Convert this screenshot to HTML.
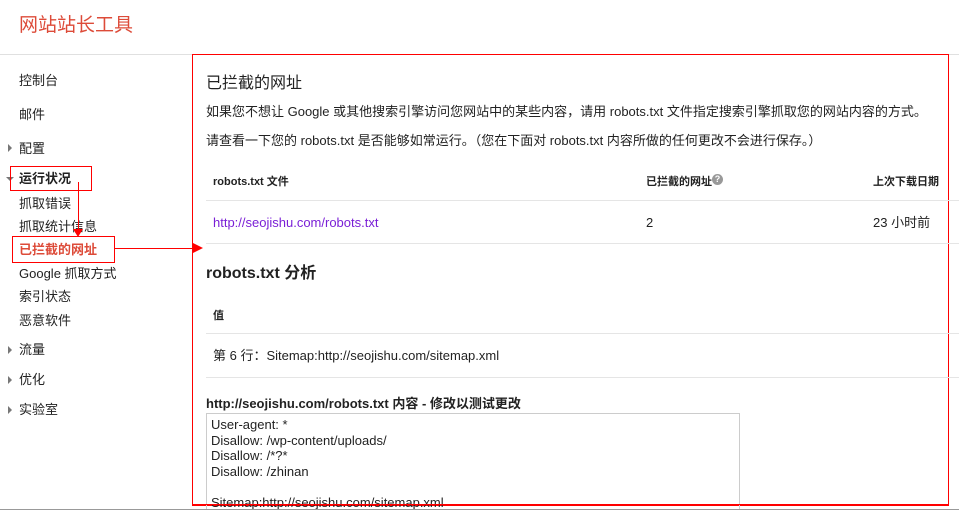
<!DOCTYPE html>
<html style="width:959px;height:513px;overflow:hidden"><head><meta charset="utf-8"><style>
*{margin:0;padding:0;box-sizing:border-box}
body{width:959px;height:513px;overflow:hidden;background:#fff;font-family:"Liberation Sans","Noto Sans CJK SC",sans-serif;color:#222;position:relative;font-size:13px;line-height:17px}
.a{position:absolute;white-space:nowrap}
.hl{position:absolute;height:1px;background:#e5e5e5}
.tri{position:absolute;width:0;height:0}
</style></head><body>
<div class="a" style="left:19px;top:14px;font-size:19px;line-height:24px;color:#dd4b39">网站站长工具</div>
<div class="hl" style="left:0;top:54px;width:959px;background:#e0e0e0"></div>

<div class="a" style="left:19px;top:72px">控制台</div>
<div class="a" style="left:19px;top:106px">邮件</div>
<div class="tri" style="left:8px;top:144px;border-left:4px solid #777;border-top:4px solid transparent;border-bottom:4px solid transparent"></div>
<div class="a" style="left:19px;top:140px">配置</div>
<div class="tri" style="left:6px;top:177px;border-top:4px solid #777;border-left:4px solid transparent;border-right:4px solid transparent"></div>
<div class="a" style="left:19px;top:170px;font-weight:bold">运行状况</div>
<div class="a" style="left:19px;top:195px">抓取错误</div>
<div class="a" style="left:19px;top:218px">抓取统计信息</div>
<div class="a" style="left:19px;top:241px;font-weight:bold;color:#dd4b39">已拦截的网址</div>
<div class="a" style="left:19px;top:265px">Google 抓取方式</div>
<div class="a" style="left:19px;top:288px">索引状态</div>
<div class="a" style="left:19px;top:312px">恶意软件</div>
<div class="tri" style="left:8px;top:346px;border-left:4px solid #777;border-top:4px solid transparent;border-bottom:4px solid transparent"></div>
<div class="a" style="left:19px;top:341px">流量</div>
<div class="tri" style="left:8px;top:376px;border-left:4px solid #777;border-top:4px solid transparent;border-bottom:4px solid transparent"></div>
<div class="a" style="left:19px;top:371px">优化</div>
<div class="tri" style="left:8px;top:406px;border-left:4px solid #777;border-top:4px solid transparent;border-bottom:4px solid transparent"></div>
<div class="a" style="left:19px;top:401px">实验室</div>

<div class="a" style="left:10px;top:166px;width:82px;height:25px;border:1px solid #f00"></div>
<div class="a" style="left:12px;top:236px;width:103px;height:27px;border:1px solid #f00"></div>
<div class="a" style="left:78px;top:182px;width:1px;height:48px;background:#f00"></div>
<div class="tri" style="left:73px;top:229px;border-top:8px solid #f00;border-left:5px solid transparent;border-right:5px solid transparent"></div>
<div class="a" style="left:115px;top:248px;width:80px;height:1px;background:#f00"></div>
<div class="tri" style="left:193px;top:243px;border-left:10px solid #f00;border-top:5px solid transparent;border-bottom:5px solid transparent"></div>

<div class="a" style="left:192px;top:54px;width:757px;height:452px;border:1px solid #f00"></div>

<div class="a" style="left:206px;top:74px;font-size:16px;line-height:20px">已拦截的网址</div>
<div class="a" style="left:206px;top:103px">如果您不想让 Google 或其他搜索引擎访问您网站中的某些内容，请用 robots.txt 文件指定搜索引擎抓取您的网站内容的方式。</div>
<div class="a" style="left:206px;top:132px">请查看一下您的 robots.txt 是否能够如常运行。（您在下面对 robots.txt 内容所做的任何更改不会进行保存。）</div>
<div class="a" style="left:213px;top:174px;font-size:11px;font-weight:bold">robots.txt 文件</div>
<div class="a" style="left:646px;top:174px;font-size:11px;font-weight:bold">已拦截的网址<span style="display:inline-block;width:11px;height:11px;border-radius:50%;background:#999;color:#fff;font-size:9px;text-align:center;line-height:11px;vertical-align:top">?</span></div>
<div class="a" style="left:873px;top:174px;font-size:11px;font-weight:bold">上次下载日期</div>
<div class="hl" style="left:206px;top:200px;width:753px"></div>
<div class="a" style="left:213px;top:214px;color:#7a1fd6">http://seojishu.com/robots.txt</div>
<div class="a" style="left:646px;top:214px">2</div>
<div class="a" style="left:873px;top:214px">23 小时前</div>
<div class="hl" style="left:206px;top:243px;width:753px"></div>
<div class="a" style="left:206px;top:264px;font-size:16px;line-height:20px;font-weight:bold">robots.txt 分析</div>
<div class="a" style="left:213px;top:308px;font-size:11px;font-weight:bold">值</div>
<div class="hl" style="left:206px;top:333px;width:753px"></div>
<div class="a" style="left:213px;top:347px">第 6 行：Sitemap:http://seojishu.com/sitemap.xml</div>
<div class="hl" style="left:206px;top:377px;width:753px"></div>
<div class="a" style="left:206px;top:395px;font-weight:bold">http://seojishu.com/robots.txt 内容 - 修改以测试更改</div>
<div class="a" style="left:206px;top:413px;width:534px;height:96px;overflow:hidden;border:1px solid #ccc;border-bottom:none;padding:3px 4px;line-height:15.5px;white-space:pre">User-agent: *
Disallow: /wp-content/uploads/
Disallow: /*?*
Disallow: /zhinan

Sitemap:http://seojishu.com/sitemap.xml</div>
<div class="a" style="left:192px;top:504px;width:757px;height:1px;background:#f00"></div>
<div class="a" style="left:0;top:509px;width:959px;height:4px;background:#fff;border-top:1px solid #999"></div>
</body></html>
